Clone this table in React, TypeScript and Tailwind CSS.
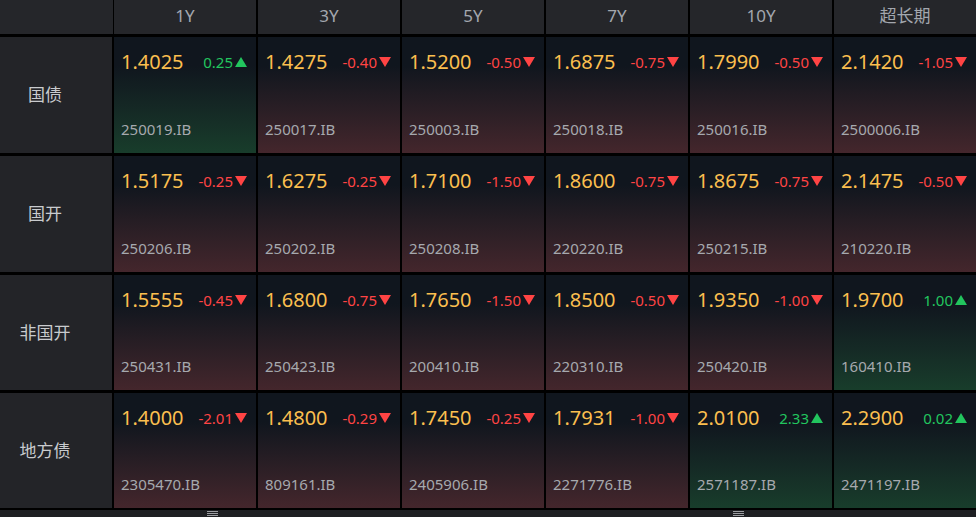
import React from "react";

type Cell = { y: string; c: string; code: string };

const cols = ["1Y", "3Y", "5Y", "7Y", "10Y", "超长期"];
const rows: { label: string; h: string; cells: Cell[] }[] = [
  {
    label: "国债",
    h: "h-[116px]",
    cells: [
      { y: "1.4025", c: "0.25", code: "250019.IB" },
      { y: "1.4275", c: "-0.40", code: "250017.IB" },
      { y: "1.5200", c: "-0.50", code: "250003.IB" },
      { y: "1.6875", c: "-0.75", code: "250018.IB" },
      { y: "1.7990", c: "-0.50", code: "250016.IB" },
      { y: "2.1420", c: "-1.05", code: "2500006.IB" },
    ],
  },
  {
    label: "国开",
    h: "h-[116px]",
    cells: [
      { y: "1.5175", c: "-0.25", code: "250206.IB" },
      { y: "1.6275", c: "-0.25", code: "250202.IB" },
      { y: "1.7100", c: "-1.50", code: "250208.IB" },
      { y: "1.8600", c: "-0.75", code: "220220.IB" },
      { y: "1.8675", c: "-0.75", code: "250215.IB" },
      { y: "2.1475", c: "-0.50", code: "210220.IB" },
    ],
  },
  {
    label: "非国开",
    h: "h-[115px]",
    cells: [
      { y: "1.5555", c: "-0.45", code: "250431.IB" },
      { y: "1.6800", c: "-0.75", code: "250423.IB" },
      { y: "1.7650", c: "-1.50", code: "200410.IB" },
      { y: "1.8500", c: "-0.50", code: "220310.IB" },
      { y: "1.9350", c: "-1.00", code: "250420.IB" },
      { y: "1.9700", c: "1.00", code: "160410.IB" },
    ],
  },
  {
    label: "地方债",
    h: "h-[115px]",
    cells: [
      { y: "1.4000", c: "-2.01", code: "2305470.IB" },
      { y: "1.4800", c: "-0.29", code: "809161.IB" },
      { y: "1.7450", c: "-0.25", code: "2405906.IB" },
      { y: "1.7931", c: "-1.00", code: "2271776.IB" },
      { y: "2.0100", c: "2.33", code: "2571187.IB" },
      { y: "2.2900", c: "0.02", code: "2471197.IB" },
    ],
  },
];

const font = { fontFamily: '"Noto Sans", "Noto Sans CJK SC", sans-serif' };

function Tri({ up }: { up: boolean }) {
  return (
    <svg width="12" height="10" viewBox="0 0 12 10" className="ml-[2px]">
      {up ? (
        <polygon points="6,0 12,10 0,10" fill="#22c55e" />
      ) : (
        <polygon points="0,0 12,0 6,10" fill="#ff4444" />
      )}
    </svg>
  );
}

function DataCell({ cell }: { cell: Cell }) {
  const up = !cell.c.startsWith("-");
  return (
    <div
      className={
        "flex flex-col justify-between pl-[7px] pr-[9px] pt-[11px] pb-[14px] bg-gradient-to-b from-[#10161e] from-[25%] " +
        (up ? "to-[#183d2b]" : "to-[#44262c]")
      }
    >
      <div className="flex items-center justify-between h-[28px]">
        <span className="text-[20px] leading-[28px] text-[#fbbf4f]">{cell.y}</span>
        <span className="flex items-center">
          <span className={"text-[15px] leading-[20px] " + (up ? "text-[#22c55e]" : "text-[#ff4444]")}>
            {cell.c}
          </span>
          <Tri up={up} />
        </span>
      </div>
      <div className="text-[15px] leading-[20px] text-[#a6a9ae]">{cell.code}</div>
    </div>
  );
}

function Grip() {
  return (
    <div className="flex flex-col gap-[1px] w-[11px]">
      <div className="h-[1px] bg-[#9a9ca0]" />
      <div className="h-[1px] bg-[#9a9ca0]" />
      <div className="h-[1px] bg-[#9a9ca0]" />
    </div>
  );
}

export default function App() {
  return (
    <div className="w-[976px] h-[517px] bg-black overflow-hidden flex flex-col" style={font}>
      <div className="grid grid-cols-[112px_repeat(6,1fr)] gap-y-[3px] gap-x-[2px] bg-black">
        <div className="h-[34px] bg-[#25262a] mr-[-1px]" />
        {cols.map((c) => (
          <div
            key={c}
            className="h-[34px] bg-[#25262a] flex items-center justify-center text-[17px] text-[#a3a7ae] pb-[2px]"
          >
            {c}
          </div>
        ))}
        {rows.map((r) => (
          <React.Fragment key={r.label}>
            <div className={r.h + " bg-[#232428] flex items-center justify-center pr-[22px] text-[17px] text-[#c9cbce]"}>
              {r.label}
            </div>
            {r.cells.map((cell, i) => (
              <DataCell key={i} cell={cell} />
            ))}
          </React.Fragment>
        ))}
      </div>
      <div className="mt-[2px] flex-1 bg-[#1e1f22] flex items-center">
        <div className="ml-[207px]">
          <Grip />
        </div>
        <div className="ml-[515px]">
          <Grip />
        </div>
      </div>
    </div>
  );
}
